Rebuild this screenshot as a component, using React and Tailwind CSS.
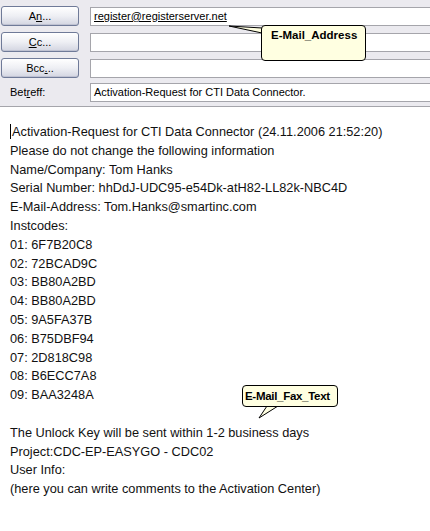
import React from "react";

const headerFont = { fontFamily: '"Liberation Sans", Arial, sans-serif' };

function XpButton({ children }) {
  return (
    <button className="w-[78px] h-[20px] ml-[1px] rounded-[3px] border border-[#6f7a98] bg-gradient-to-b from-white via-[#eeeff4] to-[#d3d5e1] text-[11px] text-black flex items-center justify-center shadow-[inset_0_-1px_0_#bfc2d2]">
      {children}
    </button>
  );
}

function Field({ children, underline }) {
  return (
    <div className="flex-1 h-[19px] border border-r-0 border-[#a5a5ab] bg-white flex items-center pl-[3px] text-[11px] text-black whitespace-nowrap overflow-hidden">
      <span className={underline ? "underline" : ""}>{children}</span>
    </div>
  );
}

function Callout({ className, text, tail, textClass }) {
  return (
    <div className={"absolute " + className}>
      {tail}
      <div
        className={
          "relative h-full w-full rounded-[4px] border border-black bg-[#ffffe1] font-bold text-black whitespace-nowrap " +
          textClass
        }
        style={headerFont}
      >
        {text}
      </div>
    </div>
  );
}

const body = [
  "Activation-Request for CTI Data Connector (24.11.2006 21:52:20)",
  "Please do not change the following information",
  "Name/Company: Tom Hanks",
  "Serial Number: hhDdJ-UDC95-e54Dk-atH82-LL82k-NBC4D",
  "E-Mail-Address: Tom.Hanks@smartinc.com",
  "Instcodes:",
  "01: 6F7B20C8",
  "02: 72BCAD9C",
  "03: BB80A2BD",
  "04: BB80A2BD",
  "05: 9A5FA37B",
  "06: B75DBF94",
  "07: 2D818C98",
  "08: B6ECC7A8",
  "09: BAA3248A",
  "",
  "The Unlock Key will be sent within 1-2 business days",
  "Project:CDC-EP-EASYGO - CDC02",
  "User Info:",
  "(here you can write comments to the Activation Center)",
];

export default function App() {
  return (
    <div className="relative w-[430px] h-[531px] overflow-hidden bg-white" style={headerFont}>
      <div className="h-[107px] bg-[#ebeaef] border-b border-[#a5a5ab] pt-[6px] flex flex-col gap-[6px]">
        <div className="flex items-center gap-[11px]">
          <XpButton>
            A<span className="underline">n</span>...
          </XpButton>
          <Field underline>register@registerserver.net</Field>
        </div>
        <div className="flex items-center gap-[11px]">
          <XpButton>
            <span className="underline">C</span>c...
          </XpButton>
          <Field />
        </div>
        <div className="flex items-center gap-[11px]">
          <XpButton>
            Bcc<span className="underline">.</span>..
          </XpButton>
          <Field />
        </div>
        <div className="flex items-center gap-[11px] -mt-[1px]">
          <div className="w-[79px] pl-[10px] text-[11px] text-black">
            Bet<span className="underline">r</span>eff:
          </div>
          <Field>Activation-Request for CTI Data Connector.</Field>
        </div>
      </div>

      <div className="pt-[16px] pl-[10px] text-[12.75px] leading-[18.8px] text-[#111]">
        {body.map((line, i) => (
          <div key={i} className="whitespace-nowrap h-[18.8px]">
            {i === 0 && (
              <span className="inline-block w-px h-[15px] bg-black align-[-3px] mr-[1px]" />
            )}
            {line}
          </div>
        ))}
      </div>

      <Callout
        className="left-[261px] top-[25px] w-[105px] h-[36px]"
        textClass="text-[11.5px] pl-[9px] pt-[1px]"
        text="E-Mail_Address"
        tail={
          <svg className="absolute -left-[33px] top-[0px] overflow-visible" width="36" height="12" viewBox="0 0 36 12">
            <polygon points="1,1 34,3 34,8" fill="#ffffe1" stroke="black" strokeWidth="1" />
          </svg>
        }
      />

      <Callout
        className="left-[242px] top-[385px] w-[96px] h-[22px]"
        textClass="text-[11.5px] pl-[2px] leading-[20px] tracking-[-0.3px]"
        text="E-Mail_Fax_Text"
        tail={
          <svg className="absolute left-[14px] top-[19px] overflow-visible" width="24" height="16" viewBox="0 0 24 16">
            <polygon points="11,2 22,2 3,14" fill="#ffffe1" stroke="black" strokeWidth="1" />
          </svg>
        }
      />
    </div>
  );
}
